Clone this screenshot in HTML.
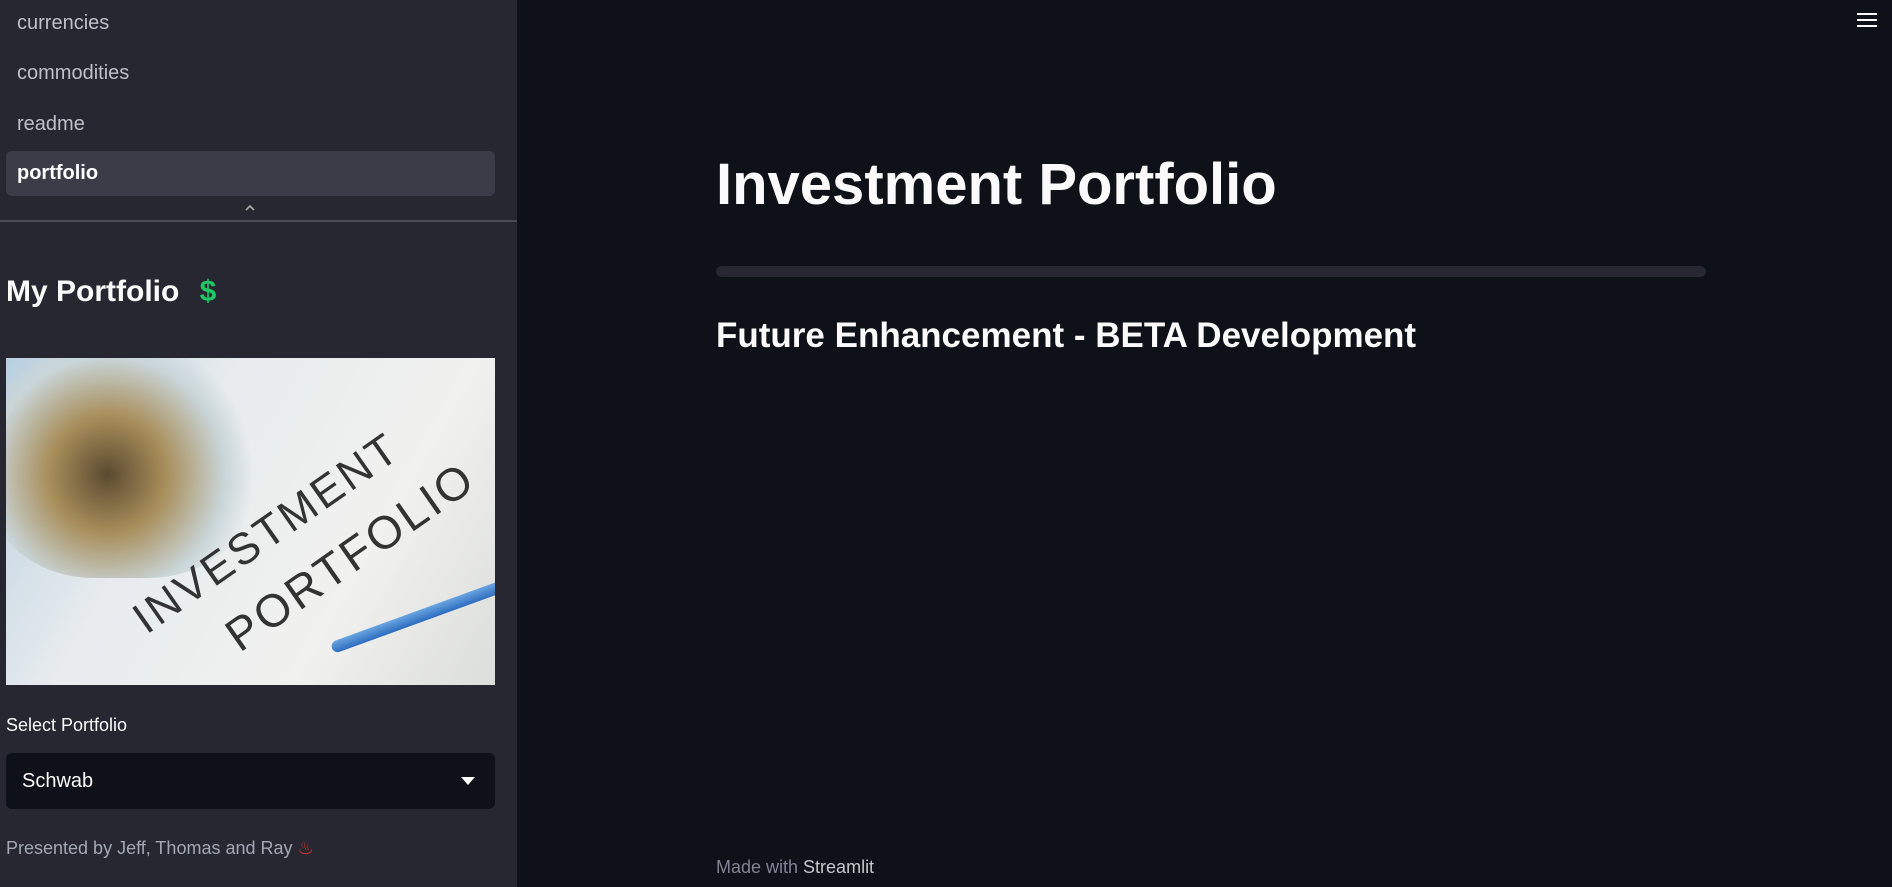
<!DOCTYPE html>
<html><head><meta charset="utf-8"><style>
*{box-sizing:border-box;margin:0;padding:0}
body{width:1892px;height:887px;overflow:hidden;background:#0e1117;font-family:"Liberation Sans",sans-serif;position:relative;color:#fafafa}
.sb{position:absolute;left:0;top:0;width:517px;height:887px;background:#262730}
.nav{position:absolute;left:17px;font-size:20px;color:#bfc0c6}
.hl{position:absolute;left:6px;top:151px;width:489px;height:45px;background:#3b3c48;border-radius:6px}
.div{position:absolute;left:0;top:220px;width:517px;height:2px;background:#4a4b55}
.img{position:absolute;left:6px;top:358px;width:489px;height:327px;overflow:hidden;background:linear-gradient(120deg,#b9cfe0 0%,#e8ecee 35%,#f1f1ef 70%,#dcdedc 100%)}
.sel{position:absolute;left:6px;top:753px;width:489px;height:56px;background:#0e1117;border-radius:6px}
</style></head><body>
<div class="sb">
<div class="nav" style="top:12px">currencies</div>
<div class="nav" style="top:62px">commodities</div>
<div class="nav" style="top:113px">readme</div>
<div class="hl"></div>
<div class="nav" style="top:162px;color:#fff;font-weight:bold">portfolio</div>
<svg style="position:absolute;left:244px;top:204px" width="12" height="8" viewBox="0 0 12 8"><path d="M2 6L6 2L10 6" stroke="#aaa" stroke-width="1.6" fill="none"/></svg>
<div class="div"></div>
<div style="position:absolute;left:6px;top:275px;font-size:30px;font-weight:bold;color:#fafafa">My Portfolio <span style="color:#1fc765;margin-left:12px">$</span></div>
<div class="img">
<div style="position:absolute;left:-20px;top:-10px;width:270px;height:230px;border-radius:40%;background:radial-gradient(circle at 45% 55%,#5a4a30 0%,#a88e5a 30%,#c9d5d8 60%,rgba(200,215,220,0) 75%)"></div>
<div style="position:absolute;left:118px;top:245px;transform:rotate(-35deg);transform-origin:left top;font-size:44px;color:#333;letter-spacing:3px;white-space:nowrap">INVESTMENT</div>
<div style="position:absolute;left:240px;top:250px;transform:rotate(-35deg);transform-origin:left bottom;font-size:46px;color:#333;letter-spacing:3px;white-space:nowrap">PORTFOLIO</div>
<div style="position:absolute;left:320px;top:250px;width:200px;height:12px;background:linear-gradient(#6aa5e0,#2c6cc0);transform:rotate(-20deg);border-radius:6px"></div>
</div>
<div style="position:absolute;left:6px;top:715px;font-size:18px;color:#fafafa">Select Portfolio</div>
<div class="sel"><div style="position:absolute;left:16px;top:17px;font-size:20px;color:#fafafa">Schwab</div>
<svg style="position:absolute;left:455px;top:24px" width="14" height="8"><path d="M0 0H14L7 8Z" fill="#fff"/></svg></div>
<div style="position:absolute;left:6px;top:838px;font-size:18px;color:#a3a8b4">Presented by Jeff, Thomas and Ray <span style="color:#e0302a">♨</span></div>
</div>
<svg style="position:absolute;left:1857px;top:12px" width="20" height="16"><path d="M0 2H20M0 8H20M0 14H20" stroke="#fff" stroke-width="2"/></svg>
<div style="position:absolute;left:716px;top:151px;font-size:58px;font-weight:bold;color:#fafafa">Investment Portfolio</div>
<div style="position:absolute;left:716px;top:266px;width:990px;height:11px;background:#262730;border-radius:6px"></div>
<div style="position:absolute;left:716px;top:316px;font-size:35px;font-weight:bold;color:#fafafa">Future Enhancement - BETA Development</div>
<div style="position:absolute;left:716px;top:857px;font-size:18px;color:#808495">Made with <span style="color:#c5c7cc">Streamlit</span></div>
</body></html>
